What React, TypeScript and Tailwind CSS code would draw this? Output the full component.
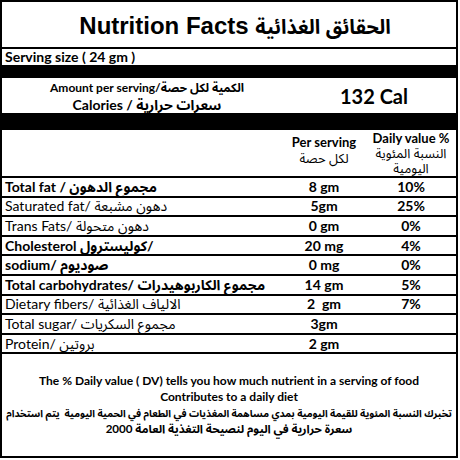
const body = { fontFamily: "Lato, 'Noto Sans Arabic', 'DejaVu Sans', sans-serif" };
const title = { fontFamily: "'Liberation Sans', 'Noto Sans Arabic', 'DejaVu Sans', sans-serif" };

type Row = { label: string; amount: string; dv: string; bold: boolean };

const rows: Row[] = [
  { label: "Total fat / مجموع الدهون", amount: "8 gm", dv: "10%", bold: true },
  { label: "Saturated fat/ دهون مشبعة", amount: "5gm", dv: "25%", bold: false },
  { label: "Trans Fats/ دهون متحولة", amount: "0 gm", dv: "0%", bold: false },
  { label: "Cholesterol كوليسترول/", amount: "20 mg", dv: "4%", bold: true },
  { label: "sodium/ صوديوم", amount: "0 mg", dv: "0%", bold: true },
  { label: "Total carbohydrates/ مجموع الكاربوهيدرات", amount: "14 gm", dv: "5%", bold: true },
  { label: "Dietary fibers/ الالياف الغذائية", amount: "2  gm", dv: "7%", bold: false },
  { label: "Total sugar/ مجموع السكريات", amount: "3gm", dv: "", bold: false },
  { label: "Protein/ بروتين", amount: "2 gm", dv: "", bold: false },
];

export default function App() {
  return (
    <div className="h-[460px] w-[460px] bg-white text-black" style={body}>
      <div className="flex h-[458px] w-[458px] flex-col border-2 border-black">
        {/* title */}
        <div className="flex h-[47px] items-center justify-center border-b-2 border-black pt-[3px] pl-[12px]">
          <h1 className="text-[24px] font-bold leading-none" style={title}>
            Nutrition Facts <span className="text-[20px]">الحقائق الغذائية</span>
          </h1>
        </div>

        <div className="flex h-[16px] items-center pl-[3px] text-[14px] font-bold leading-none">
          Serving size ( 24 gm )
        </div>
        <div className="h-[13px] bg-black" />

        {/* calories */}
        <div className="flex h-[35px] items-center">
          <div className="flex w-[290px] flex-col items-center leading-[17px]">
            <span className="text-[12px] font-bold">Amount per serving/الكمية لكل حصة</span>
            <span className="text-[14px] font-bold">Calories /  سعرات حرارية</span>
          </div>
          <div className="flex-1 text-center text-[20px] font-bold">132 Cal</div>
        </div>
        <div className="h-[17px] bg-black" />

        {/* header */}
        <div className="grid h-[48px] grid-cols-[1fr_84px_90px] border-b-2 border-black">
          <div />
          <div className="flex flex-col items-center justify-center pb-[6px] text-[13px] leading-[16px]">
            <span className="font-bold">Per serving</span>
            <span>لكل حصة</span>
          </div>
          <div className="flex flex-col items-center justify-center text-[13px] leading-[15px]">
            <span className="font-bold">Daily value %</span>
            <span>النسبة المئوية</span>
            <span>اليومية</span>
          </div>
        </div>

        {rows.map((r) => (
          <div
            key={r.label}
            className="grid h-[19.6px] grid-cols-[1fr_84px_90px] items-center border-b-2 border-black text-[14px] leading-none"
          >
            <div className={r.bold ? "pl-[3px] font-bold" : "pl-[3px]"}>{r.label}</div>
            <div className="whitespace-pre text-center font-bold">{r.amount}</div>
            <div className="text-center font-bold">{r.dv}</div>
          </div>
        ))}

        {/* footer */}
        <div className="flex flex-1 flex-col items-center justify-center text-center text-[12px] font-bold leading-[16px]">
          <p>The % Daily value ( DV) tells you how much nutrient in a serving of food</p>
          <p>Contributes to a daily diet</p>
          <p className="whitespace-pre text-[10px]">تخبرك النسبة المئوية للقيمة اليومية بمدي مساهمة المغذيات في الطعام في الحمية اليومية  يتم استخدام</p>
          <p className="text-[11.6px]">سعرة حرارية في اليوم لنصيحة التغذية العامة 2000</p>
        </div>
      </div>
    </div>
  );
}
